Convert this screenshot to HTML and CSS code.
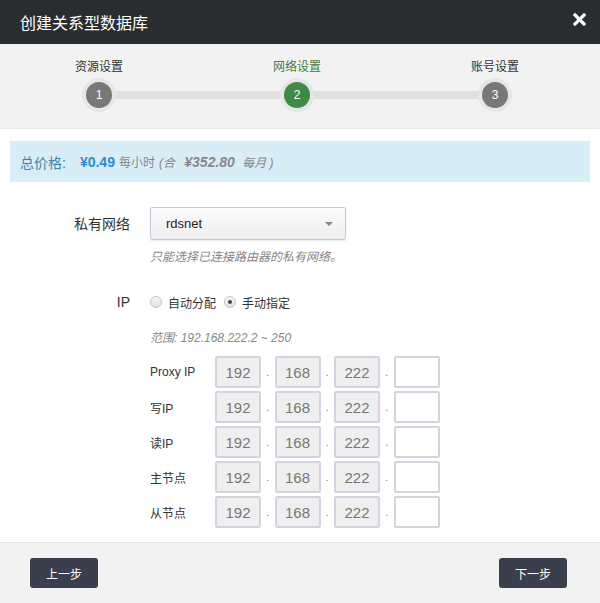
FILE: index.html
```html
<!DOCTYPE html>
<html lang="zh">
<head>
  <meta charset="UTF-8">
  <title>创建关系型数据库</title>
  <link rel="stylesheet" href="styles.css">
</head>
<body>

<div class="dialog">
  <div class="dialog-header">
    <span class="dialog-title">创建关系型数据库</span>
    <svg class="close" width="13" height="13" viewBox="0 0 13 13">
      <path d="M2 2 L11 11 M11 2 L2 11" stroke="#fff" stroke-width="3.2" stroke-linecap="square"/>
    </svg>
  </div>

  <div class="steps">
    <div class="step done">
      <div class="step-name">资源设置</div>
      <div class="step-num">1</div>
    </div>
    <div class="step active">
      <div class="step-name">网络设置</div>
      <div class="step-num">2</div>
    </div>
    <div class="step">
      <div class="step-name">账号设置</div>
      <div class="step-num">3</div>
    </div>
  </div>

  <div class="price-bar">
    <span class="price-label">总价格:</span>
    <span class="price-hour">¥0.49</span>
    <span class="unit">每小时</span>
    <span class="price-month">(合 <b>¥352.80</b> 每月 )</span>
  </div>

  <div class="form">
    <div class="form-row">
      <label class="form-label">私有网络</label>
      <div class="form-field">
        <div class="select">
          <span>rdsnet</span>
          <span class="caret"></span>
        </div>
        <p class="help">只能选择已连接路由器的私有网络。</p>
      </div>
    </div>

    <div class="form-row ip-row">
      <label class="form-label">IP</label>
      <div class="form-field">
        <div class="radios">
          <label class="radio"><span class="radio-dot"></span>自动分配</label>
          <label class="radio"><span class="radio-dot checked"></span>手动指定</label>
        </div>
        <p class="help range">范围: 192.168.222.2 ~ 250</p>

        <div class="ip-list">
          <div class="ip-line">
            <span class="ip-name">Proxy IP</span>
            <span class="octet">192</span><span class="dot">.</span>
            <span class="octet">168</span><span class="dot">.</span>
            <span class="octet">222</span><span class="dot">.</span>
            <span class="octet empty"></span>
          </div>
          <div class="ip-line">
            <span class="ip-name">写IP</span>
            <span class="octet">192</span><span class="dot">.</span>
            <span class="octet">168</span><span class="dot">.</span>
            <span class="octet">222</span><span class="dot">.</span>
            <span class="octet empty"></span>
          </div>
          <div class="ip-line">
            <span class="ip-name">读IP</span>
            <span class="octet">192</span><span class="dot">.</span>
            <span class="octet">168</span><span class="dot">.</span>
            <span class="octet">222</span><span class="dot">.</span>
            <span class="octet empty"></span>
          </div>
          <div class="ip-line">
            <span class="ip-name">主节点</span>
            <span class="octet">192</span><span class="dot">.</span>
            <span class="octet">168</span><span class="dot">.</span>
            <span class="octet">222</span><span class="dot">.</span>
            <span class="octet empty"></span>
          </div>
          <div class="ip-line">
            <span class="ip-name">从节点</span>
            <span class="octet">192</span><span class="dot">.</span>
            <span class="octet">168</span><span class="dot">.</span>
            <span class="octet">222</span><span class="dot">.</span>
            <span class="octet empty"></span>
          </div>
        </div>
      </div>
    </div>
  </div>

  <div class="dialog-footer">
    <button class="btn">上一步</button>
    <button class="btn">下一步</button>
  </div>
</div>

</body>
</html>
```

FILE: styles.css
```css
* {
  box-sizing: border-box;
}

body {
  margin: 0;
  font-family: "Liberation Sans", Arial, "Noto Sans CJK SC", sans-serif;
  color: #333;
  background: #fff;
}

.dialog {
  width: 600px;
  height: 603px;
  display: flex;
  flex-direction: column;
}

.dialog-header {
  height: 44px;
  background: #2a2d2f;
  color: #fff;
  display: flex;
  align-items: center;
  justify-content: space-between;
  padding: 0 14px 0 20px;
}

.dialog-title {
  font-size: 16px;
}

.close {
  display: block;
  margin-top: -6px;
}

/* steps */
.steps {
  height: 85px;
  background: #f2f2f2;
  border-bottom: 1px solid #e8e8e8;
  display: grid;
  grid-template-columns: 198px 198px 198px;
  padding-top: 15px;
}

.step {
  position: relative;
  display: flex;
  flex-direction: column;
  align-items: center;
}

.step-name {
  font-size: 12px;
  line-height: 16px;
  color: #333;
}

.step.active .step-name {
  color: #3e7d3e;
}

.step::before {
  content: "";
  position: absolute;
  top: 32px;
  left: 0;
  right: 0;
  height: 8px;
  background: #e0e0e0;
}

.step:first-child::before {
  left: 50%;
}

.step:last-child::before {
  right: 50%;
}

.step-num {
  position: relative;
  margin-top: 7px;
  width: 26px;
  height: 26px;
  border-radius: 50%;
  background: #787878;
  color: #fff;
  font-size: 12px;
  line-height: 26px;
  text-align: center;
  box-shadow: 0 0 0 4px #e6e6e6;
}

.step.active .step-num {
  background: #3d8b45;
}

/* price */
.price-bar {
  margin: 12px 10px 0;
  height: 41px;
  background: #d9edf7;
  display: flex;
  align-items: center;
  padding-left: 10px;
  font-size: 12px;
  color: #888;
}

.price-label {
  font-size: 14px;
  color: #3a87ad;
  margin-right: 14px;
}

.price-hour {
  font-size: 14px;
  font-weight: bold;
  color: #2a8ed0;
  margin-right: 4px;
}

.price-month {
  font-style: italic;
  margin-left: 4px;
}

.price-month b {
  font-size: 14px;
  margin: 0 4px 0 6px;
}

/* form */
.form {
  flex: 1;
  padding-top: 25px;
}

.form-row {
  display: flex;
}

.form-label {
  width: 130px;
  text-align: right;
  font-size: 14px;
  line-height: 34px;
  margin-right: 20px;
}

.form-field {
  flex: 1;
}

.select {
  width: 196px;
  height: 33px;
  border: 1px solid #c7c7d9;
  border-radius: 2px;
  background: linear-gradient(#fbfbfb, #efefef);
  box-shadow: 0 1px 2px rgba(0, 0, 0, 0.1);
  display: flex;
  align-items: center;
  justify-content: space-between;
  padding: 0 12px 0 15px;
  font-size: 13px;
  color: #222;
}

.caret {
  width: 0;
  height: 0;
  border-left: 4px solid transparent;
  border-right: 4px solid transparent;
  border-top: 4px solid #888;
}

.help {
  margin: 8px 0 0;
  font-size: 12px;
  line-height: 18px;
  font-style: italic;
  color: #888;
}

.ip-row {
  margin-top: 26px;
}

.ip-row .form-label {
  line-height: 20px;
}

.radios {
  display: flex;
  gap: 8px;
  height: 20px;
  align-items: center;
}

.radio {
  display: flex;
  align-items: center;
  font-size: 12px;
  color: #333;
}

.radio-dot {
  width: 12px;
  height: 12px;
  border-radius: 50%;
  border: 1px solid #c4c4c4;
  background: linear-gradient(#f6f6f6, #e0e0e0);
  margin-right: 6px;
  position: relative;
}

.radio-dot.checked::after {
  content: "";
  position: absolute;
  left: 3px;
  top: 3px;
  width: 4px;
  height: 4px;
  border-radius: 50%;
  background: #444;
}

.help.range {
  margin-top: 17px;
}

.ip-list {
  margin-top: 9px;
  display: flex;
  flex-direction: column;
  gap: 3px;
}

.ip-line {
  display: flex;
  align-items: center;
  height: 32px;
}

.ip-name {
  width: 65px;
  font-size: 12px;
  color: #333;
}

.octet {
  width: 46px;
  height: 32px;
  border: 2px solid #d4d4e0;
  border-radius: 2px;
  background: #efefef;
  color: #777;
  font-size: 15px;
  text-align: center;
  line-height: 29px;
}

.octet.empty {
  background: #fff;
}

.dot {
  width: 13.5px;
  text-align: center;
  font-size: 10px;
  color: #777;
}

/* footer */
.dialog-footer {
  height: 61px;
  background: #f2f2f2;
  border-top: 1px solid #e8e8e8;
  display: flex;
  justify-content: space-between;
  align-items: flex-start;
  padding: 15px 33px 0 30px;
}

.btn {
  width: 68px;
  height: 30px;
  border: none;
  border-radius: 3px;
  background: #3b3e4c;
  color: #fff;
  font-family: inherit;
  font-size: 12px;
  cursor: pointer;
}
```
